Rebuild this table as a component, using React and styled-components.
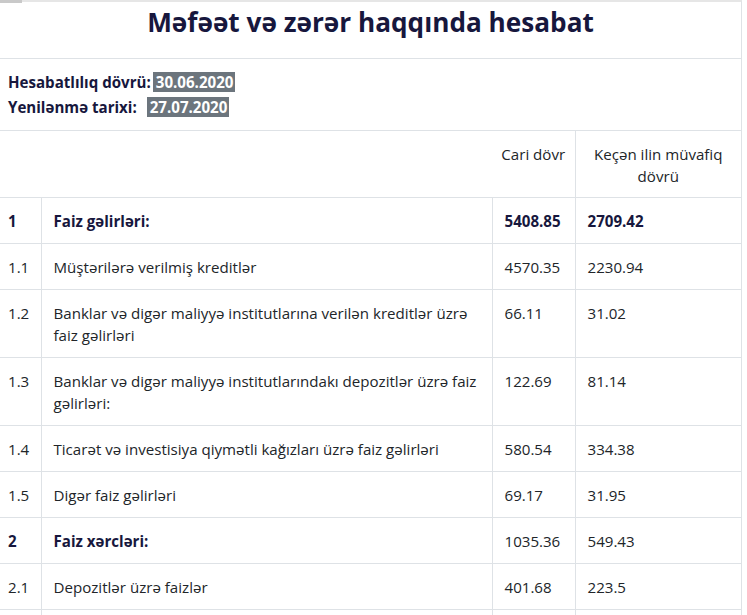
import React from 'react';
import styled, { createGlobalStyle } from 'styled-components';

const GlobalStyle = createGlobalStyle`
  body {
    margin: 0;
    background: #fff;
    font-family: "Open Sans", "Noto Sans", sans-serif;
    color: #212529;
  }
`;

const Page = styled.div`
  width: 741px;
  border-top: 2px solid #e6e6e6;
  border-right: 1px solid #dee2e6;
  position: relative;
`;

const TopTab = styled.div`
  position: absolute;
  top: -2px;
  left: 0;
  width: 22px;
  height: 3px;
  background: #c9c9c9;
`;

const TitleBar = styled.header`
  height: 56px;
  display: flex;
  align-items: flex-start;
  justify-content: center;
  border-bottom: 1px solid #dee2e6;
`;

const Title = styled.h1`
  margin: 2px 0 0;
  font-size: 26.2px;
  line-height: 36px;
  font-weight: 700;
  color: #17173d;
`;

const Info = styled.div`
  height: 71px;
  display: flex;
  flex-direction: column;
  justify-content: center;
  gap: 4px;
  padding-left: 8px;
  border-bottom: 1px solid #dee2e6;
`;

const InfoLine = styled.div`
  font-size: 15.1px;
  font-weight: 700;
  color: #17173d;
  line-height: 21px;
`;

const DateBadge = styled.span`
  background: #6c757d;
  color: #fff;
  padding: 0 2px 0 3px;
  margin-left: ${({ gap }) => gap || 2}px;
`;

const Table = styled.table`
  width: 100%;
  border-collapse: collapse;
  font-size: 15.1px;
  line-height: 22px;
  table-layout: fixed;
`;

const Th = styled.th`
  font-weight: 400;
  text-align: center;
  vertical-align: top;
  white-space: ${({ nowrap }) => (nowrap ? 'nowrap' : 'normal')};
  padding: 12px ${({ nowrap }) => (nowrap ? 4 : 12)}px 10px;
  border-bottom: 1px solid #dee2e6;
  border-left: ${({ lined }) => (lined ? '1px solid #dee2e6' : 'none')};
`;

const Td = styled.td`
  vertical-align: top;
  height: 22px;
  padding: 12px 12px 11px;
  padding-left: ${({ first }) => (first ? '8px' : '12px')};
  border-bottom: 1px solid #dee2e6;
  border-left: ${({ first }) => (first ? 'none' : '1px solid #dee2e6')};
  font-weight: ${({ bold }) => (bold ? 700 : 400)};
  color: ${({ bold }) => (bold ? '#17173d' : '#212529')};
`;

const rows = [
  { no: '1', name: 'Faiz gəlirləri:', cur: '5408.85', prev: '2709.42', bold: true, boldNums: true },
  { no: '1.1', name: 'Müştərilərə verilmiş kreditlər', cur: '4570.35', prev: '2230.94' },
  { no: '1.2', name: 'Banklar və digər maliyyə institutlarına verilən kreditlər üzrə faiz gəlirləri', cur: '66.11', prev: '31.02' },
  { no: '1.3', name: 'Banklar və digər maliyyə institutlarındakı depozitlər üzrə faiz gəlirləri:', cur: '122.69', prev: '81.14' },
  { no: '1.4', name: 'Ticarət və investisiya qiymətli kağızları üzrə faiz gəlirləri', cur: '580.54', prev: '334.38' },
  { no: '1.5', name: 'Digər faiz gəlirləri', cur: '69.17', prev: '31.95' },
  { no: '2', name: 'Faiz xərcləri:', cur: '1035.36', prev: '549.43', bold: true },
  { no: '2.1', name: 'Depozitlər üzrə faizlər', cur: '401.68', prev: '223.5' },
  { no: 'next', name: '', cur: '', prev: '' },
];

const App = () => (
  <>
    <GlobalStyle />
    <Page>
      <TopTab />
      <TitleBar>
        <Title>Məfəət və zərər haqqında hesabat</Title>
      </TitleBar>
      <Info>
        <InfoLine>
          Hesabatlılıq dövrü:<DateBadge>30.06.2020</DateBadge>
        </InfoLine>
        <InfoLine>
          Yenilənmə tarixi:<DateBadge gap={10}>27.07.2020</DateBadge>
        </InfoLine>
      </Info>
      <Table>
        <colgroup>
          <col style={{ width: 41 }} />
          <col style={{ width: 451 }} />
          <col style={{ width: 83 }} />
          <col />
        </colgroup>
        <thead>
          <tr>
            <Th colSpan={2} />
            <Th nowrap>Cari dövr</Th>
            <Th lined>Keçən ilin müvafiq dövrü</Th>
          </tr>
        </thead>
        <tbody>
          {rows.map((r) => (
            <tr key={r.no}>
              <Td first bold={r.bold}>{r.no === 'next' ? '' : r.no}</Td>
              <Td bold={r.bold}>{r.name}</Td>
              <Td bold={r.boldNums}>{r.cur}</Td>
              <Td bold={r.boldNums}>{r.prev}</Td>
            </tr>
          ))}
        </tbody>
      </Table>
    </Page>
  </>
);

export default App;
